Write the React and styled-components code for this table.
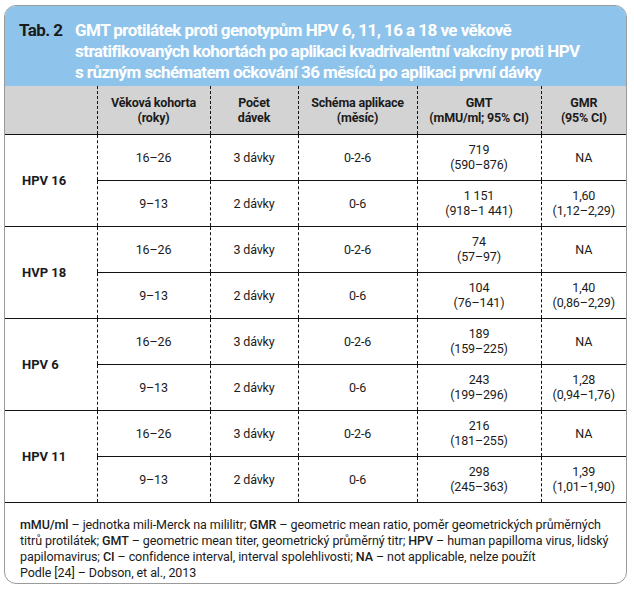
import React from "react";
import styled, { createGlobalStyle } from "styled-components";

const Global = createGlobalStyle`
  html, body { margin: 0; padding: 0; background: #fff; }
  body { font-family: Roboto, "Liberation Sans", Arial, sans-serif; color: #1a1a1a; }
`;

const Page = styled.div`
  padding: 5px 0 0 4px;
`;

const Card = styled.div`
  width: 623px;
  box-sizing: border-box;
  border: 1px solid #9a9a9a;
  border-radius: 12px;
  overflow: hidden;
  background: #fff;
`;

const TitleBar = styled.div`
  background: #8ec4ec;
  display: flex;
  padding: 14px 10px 8px 14px;
  height: 80px;
  box-sizing: border-box;
  font-family: Roboto, "Liberation Sans", sans-serif;
  font-weight: 700;
  font-size: 17px;
  line-height: 21px;
  letter-spacing: -0.55px;
`;

const TitleLabel = styled.div`
  color: #1b1b1b;
  width: 56px;
  flex: none;
  white-space: nowrap;
`;

const TitleText = styled.div`
  color: #fff;
  white-space: nowrap;
`;

const Table = styled.table`
  width: 621px;
  border-collapse: collapse;
  table-layout: fixed;
  font-family: Roboto, "Liberation Sans", sans-serif;
`;

const HeadRow = styled.tr`
  background: #d3d3d3;
  height: 48px;
`;

const HeadCell = styled.th`
  font-weight: 700;
  font-size: 12.5px;
  line-height: 15px;
  letter-spacing: -0.2px;
  color: #1b1b1b;
  text-align: center;
  vertical-align: middle;
  padding: 0 2px;
  border-bottom: 1px solid #111;
  border-left: ${(p) => (p.$first ? "none" : "1px dashed #111")};
`;

const BodyRow = styled.tr`
  height: 46px;
`;

const GroupCell = styled.td`
  font-weight: 700;
  font-size: 13px;
  color: #1b1b1b;
  text-align: left;
  vertical-align: middle;
  padding: 0 0 0 17px;
  border-bottom: 1px solid #111;
  white-space: nowrap;
`;

const Cell = styled.td`
  font-size: 12.5px;
  line-height: 15px;
  letter-spacing: -0.15px;
  color: #1b1b1b;
  text-align: center;
  vertical-align: middle;
  padding: 0 2px;
  border-left: 1px dashed #111;
  border-bottom: ${(p) => (p.$last ? "none" : "1px solid #111")};
  white-space: nowrap;
`;

const Footer = styled.div`
  padding: 14px 8px 2px 15px;
  font-family: Roboto, "Liberation Sans", sans-serif;
  font-size: 12.5px;
  line-height: 16px;
  letter-spacing: -0.08px;
  color: #1b1b1b;
  white-space: nowrap;
`;

const Abbr = styled.span`
  font-weight: 500;
`;

const groups = [
  {
    name: "HPV 16",
    rows: [
      ["16–26", "3 dávky", "0-2-6", "719", "(590–876)", "NA", null],
      ["9–13", "2 dávky", "0-6", "1 151", "(918–1 441)", "1,60", "(1,12–2,29)"],
    ],
  },
  {
    name: "HVP 18",
    rows: [
      ["16–26", "3 dávky", "0-2-6", "74", "(57–97)", "NA", null],
      ["9–13", "2 dávky", "0-6", "104", "(76–141)", "1,40", "(0,86–2,29)"],
    ],
  },
  {
    name: "HPV 6",
    rows: [
      ["16–26", "3 dávky", "0-2-6", "189", "(159–225)", "NA", null],
      ["9–13", "2 dávky", "0-6", "243", "(199–296)", "1,28", "(0,94–1,76)"],
    ],
  },
  {
    name: "HPV 11",
    rows: [
      ["16–26", "3 dávky", "0-2-6", "216", "(181–255)", "NA", null],
      ["9–13", "2 dávky", "0-6", "298", "(245–363)", "1,39", "(1,01–1,90)"],
    ],
  },
];

export default function App() {
  return (
    <Page>
      <Global />
      <Card>
        <TitleBar>
          <TitleLabel>Tab. 2</TitleLabel>
          <TitleText>
            GMT protilátek proti genotypům HPV 6, 11, 16 a 18 ve věkově
            <br />
            stratifikovaných kohortách po aplikaci kvadrivalentní vakcíny proti HPV
            <br />
            s různým schématem očkování 36 měsíců po aplikaci první dávky
          </TitleText>
        </TitleBar>
        <Table>
          <colgroup>
            <col style={{ width: 92 }} />
            <col style={{ width: 113 }} />
            <col style={{ width: 88 }} />
            <col style={{ width: 119 }} />
            <col style={{ width: 124 }} />
            <col style={{ width: 85 }} />
          </colgroup>
          <thead>
            <HeadRow>
              <HeadCell $first />
              <HeadCell>
                Věková kohorta
                <br />
                (roky)
              </HeadCell>
              <HeadCell>
                Počet
                <br />
                dávek
              </HeadCell>
              <HeadCell>
                Schéma aplikace
                <br />
                (měsíc)
              </HeadCell>
              <HeadCell>
                GMT
                <br />
                (mMU/ml; 95% CI)
              </HeadCell>
              <HeadCell>
                GMR
                <br />
                (95% CI)
              </HeadCell>
            </HeadRow>
          </thead>
          <tbody>
            {groups.map((g) =>
              g.rows.map((r, i) => (
                <BodyRow key={g.name + i}>
                  {i === 0 && <GroupCell rowSpan={2}>{g.name}</GroupCell>}
                  <Cell>{r[0]}</Cell>
                  <Cell>{r[1]}</Cell>
                  <Cell>{r[2]}</Cell>
                  <Cell>
                    {r[3]}
                    <br />
                    {r[4]}
                  </Cell>
                  <Cell>
                    {r[5]}
                    {r[6] && (
                      <>
                        <br />
                        {r[6]}
                      </>
                    )}
                  </Cell>
                </BodyRow>
              ))
            )}
          </tbody>
        </Table>
        <Footer>
          <Abbr>mMU/ml</Abbr> – jednotka mili-Merck na mililitr; <Abbr>GMR</Abbr> – geometric mean ratio, poměr geometrických průměrných
          <br />
          titrů protilátek; <Abbr>GMT</Abbr> – geometric mean titer, geometrický průměrný titr; <Abbr>HPV</Abbr> – human papilloma virus, lidský
          <br />
          papilomavirus; <Abbr>CI</Abbr> – confidence interval, interval spolehlivosti; <Abbr>NA</Abbr> – not applicable, nelze použít
          <br />
          Podle [24] – Dobson, et al., 2013
        </Footer>
      </Card>
    </Page>
  );
}
